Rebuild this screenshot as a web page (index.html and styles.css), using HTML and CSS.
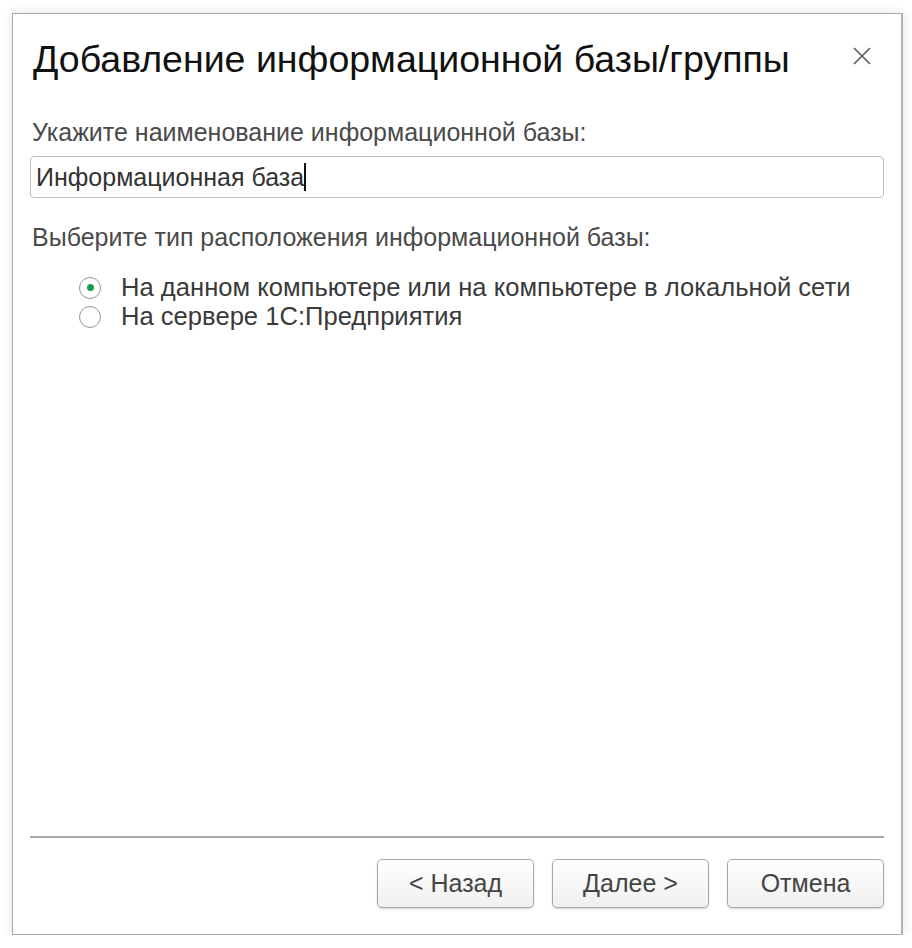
FILE: index.html
```html
<!DOCTYPE html>
<html lang="ru">
<head>
    <meta charset="UTF-8">
    <title>Добавление информационной базы/группы</title>
    <link rel="stylesheet" href="styles.css">
</head>

<body>
    <div class="window">
        <div class="header">
            <h1>Добавление информационной базы/группы</h1>
            <svg class="close" width="20" height="20" viewBox="0 0 20 20">
                <path d="M2 2 L18 18 M18 2 L2 18" stroke="#5a5a5a" stroke-width="1.6" fill="none"/>
            </svg>
        </div>

        <div class="content">
            <label class="caption" for="name">Укажите наименование информационной базы:</label>
            <div class="field">
                <span id="name">Информационная база</span><span class="caret"></span>
            </div>

            <div class="caption caption-type">Выберите тип расположения информационной базы:</div>
            <div class="radio-list">
                <div class="radio-item">
                    <span class="radio checked"></span>
                    <span class="radio-text">На данном компьютере или на компьютере в локальной сети</span>
                </div>
                <div class="radio-item">
                    <span class="radio"></span>
                    <span class="radio-text">На сервере 1С:Предприятия</span>
                </div>
            </div>
        </div>

        <div class="footer">
            <button type="button">&lt; Назад</button>
            <button type="button">Далее &gt;</button>
            <button type="button">Отмена</button>
        </div>
    </div>
</body>
</html>
```

FILE: styles.css
```css
body {
    margin: 0;
    background: #ffffff;
    font-family: 'Liberation Sans', Arial, sans-serif;
}

.window {
    box-sizing: border-box;
    width: 891px;
    height: 922px;
    margin: 13px 0 0 12px;
    padding: 0 17px 26px;
    border: 1px solid #a9a9a9;
    border-right: 2px solid #b4b4b4;
    box-shadow: 0 0 10px rgba(0, 0, 0, 0.12);
    display: flex;
    flex-direction: column;
    background: #fff;
}

.header {
    display: flex;
    align-items: center;
    justify-content: space-between;
    height: 90px;
    padding-left: 3px;
    margin-bottom: 14px;
}

h1 {
    margin: 0;
    font-size: 37.5px;
    font-weight: 400;
    color: #111;
}

.close {
    margin-right: 12px;
    margin-top: -6px;
}

.content {
    flex: 1;
}

.caption {
    display: block;
    color: #4a4a4a;
    font-size: 25px;
    line-height: 28px;
    padding-left: 2px;
}

.field {
    box-sizing: border-box;
    height: 42px;
    margin-top: 10px;
    border: 1px solid #bdbdbd;
    border-radius: 4px;
    padding: 0 5px;
    display: flex;
    align-items: center;
    font-size: 25px;
    color: #333;
}

.caret {
    width: 2px;
    height: 28px;
    background: #111;
}

.caption-type {
    margin-top: 25px;
}

.radio-list {
    margin-top: 22px;
    padding-left: 49px;
}

.radio-item {
    display: flex;
    align-items: center;
    height: 29px;
}

.radio {
    box-sizing: border-box;
    width: 22px;
    height: 22px;
    border: 1px solid #979797;
    border-radius: 50%;
    margin-right: 20px;
    display: flex;
    align-items: center;
    justify-content: center;
}

.radio.checked::after {
    content: "";
    width: 7px;
    height: 7px;
    border-radius: 50%;
    background: #1a9b4b;
}

.radio-text {
    font-size: 25.6px;
    color: #3a3a3a;
}

.footer {
    border-top: 2px solid #a8a8a8;
    padding-top: 21px;
    display: flex;
    justify-content: flex-end;
    gap: 18px;
}

button {
    width: 157px;
    height: 49px;
    border: 1px solid #a8a8a8;
    border-radius: 5px;
    background: linear-gradient(#ffffff, #f0f0f0);
    box-shadow: 0 1px 2px rgba(0, 0, 0, 0.18);
    font-family: 'Liberation Sans', Arial, sans-serif;
    font-size: 25px;
    color: #444;
}
```
